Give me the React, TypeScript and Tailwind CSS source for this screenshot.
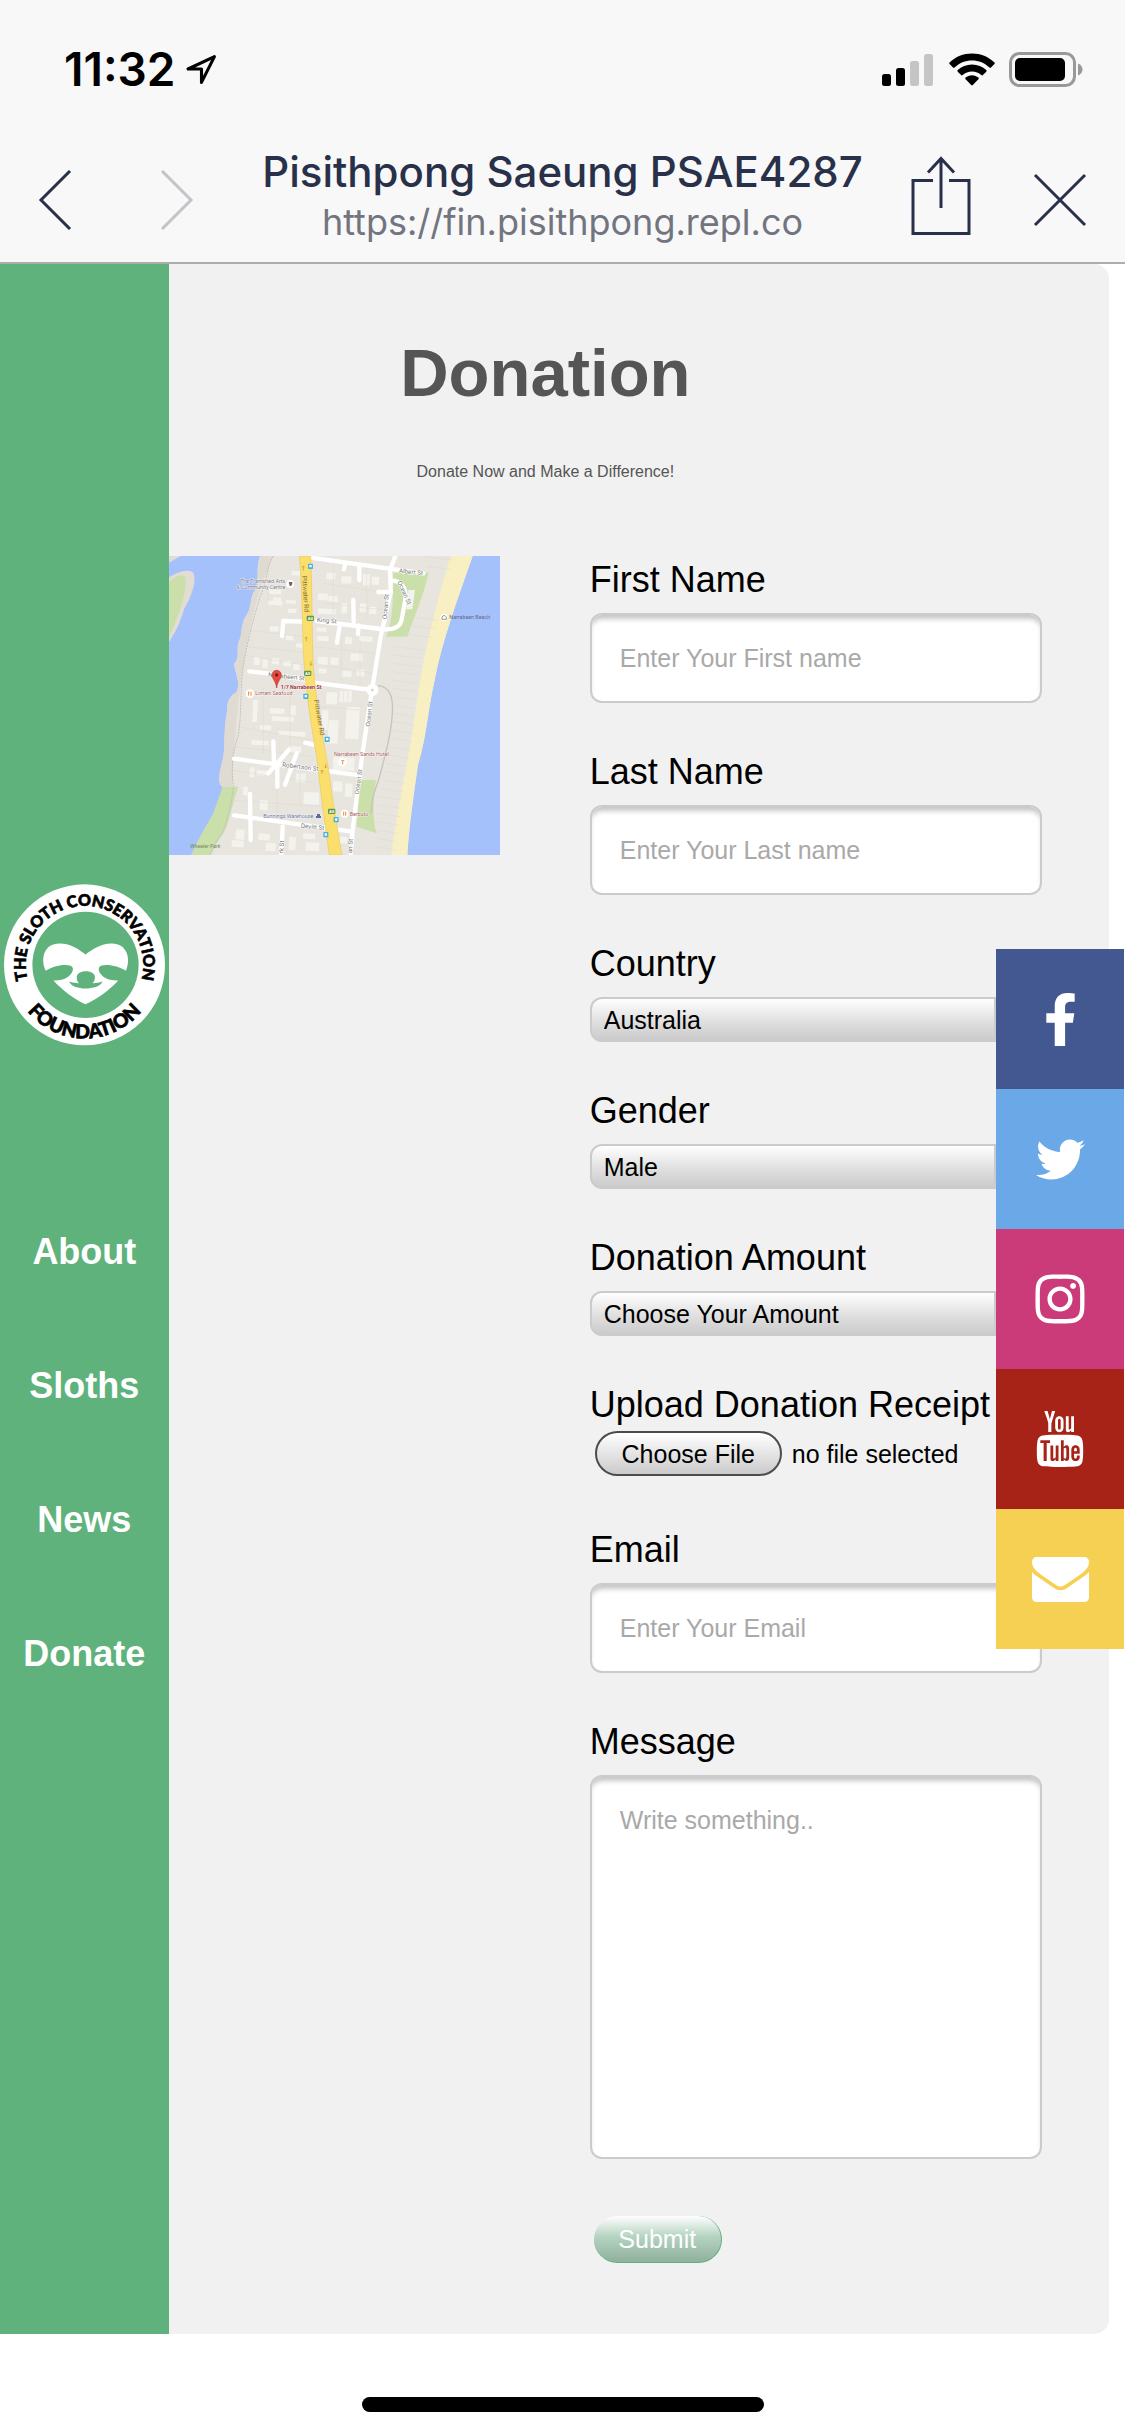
import React from "react";
import { FaFacebookF, FaTwitter, FaInstagram } from "react-icons/fa";
import { TfiYoutube } from "react-icons/tfi";

const BOX =
  "w-full rounded-xl border-2 border-[#cbcbcb] bg-white px-7 text-[25px] text-black placeholder:text-[#a9a9a9] outline-none shadow-[inset_0_6px_5px_-2px_#c6c6c6]";

function LocationArrow() {
  return (
    <svg viewBox="0 0 30 30" className="h-[31px] w-[31px]" fill="none" stroke="#000" strokeWidth="3" strokeLinejoin="round">
      <path d="M27.500 2.500 2 14.500h13v13z" />
    </svg>
  );
}

function StatusIcons() {
  return (
    <div className="flex items-center">
      <svg viewBox="0 0 52 33" className="h-[33px] w-[52px]">
        <rect x="0" y="21" width="9" height="12" rx="2.500" />
        <rect x="14" y="15" width="9" height="18" rx="2.500" />
        <rect x="28" y="8" width="9" height="25" rx="2.500" fill="#c5c5c5" />
        <rect x="42" y="1" width="9" height="32" rx="2.500" fill="#c5c5c5" />
      </svg>
      <svg viewBox="0 0 46 33" className="ml-[15px] h-[33px] w-[46px]">
        <path d="M23 0.500C14.500 0.500 6.500 3.800.600 9.400c-.5.4-.5 1.100 0 1.600l3.400 3.400c.4.4 1.100.4 1.600 0C10.200 10 16.300 7.400 23 7.400s12.800 2.600 17.400 7c.5.4 1.200.4 1.600 0l3.400-3.400c.5-.5.5-1.200 0-1.600C39.500 3.800 31.500.500 23 .500z" />
        <path d="M23 11.500c-5.500 0-10.500 2.100-14.300 5.600-.4.500-.4 1.100 0 1.600l3.400 3.400c.4.400 1.100.4 1.600 0 2.500-2.200 5.700-3.600 9.300-3.600s6.800 1.400 9.300 3.600c.5.4 1.200.4 1.600 0l3.400-3.400c.4-.5.4-1.100 0-1.600C33.500 13.600 28.500 11.500 23 11.500z" />
        <path d="M23 22.200c-2.500 0-4.700.9-6.400 2.400-.5.4-.5 1.100 0 1.600l5.600 5.900c.5.400 1.100.4 1.600 0l5.600-5.900c.5-.5.5-1.200 0-1.600-1.700-1.500-3.900-2.400-6.400-2.400z" />
      </svg>
      <svg viewBox="0 0 74 35" className="ml-[14px] h-[35px] w-[74px]">
        <rect x="1.500" y="1.500" width="64" height="32" rx="9" fill="none" stroke="#999" strokeWidth="3" />
        <rect x="6" y="6" width="50" height="23" rx="5" />
        <path d="M69 11.500c3 1 4.500 3.500 4.500 6s-1.500 5-4.500 6z" fill="#999" />
      </svg>
    </div>
  );
}

function Browser() {
  return (
    <header className="border-b-2 border-[#adadad] bg-[#f8f8f8] font-['Inter',sans-serif]">
      <div className="flex h-[138px] items-center justify-between pl-16 pr-[42px]">
        <div className="flex items-center gap-[10px]">
          <span className="text-[46px] font-semibold leading-[54px] text-black">11:32</span>
          <LocationArrow />
        </div>
        <StatusIcons />
      </div>
      <div className="grid h-[124px] grid-cols-[1fr_auto_1fr] items-center px-[38px]">
        <div className="flex items-center gap-[88px]">
          <button aria-label="Back">
            <svg viewBox="0 0 34 60" className="h-[60px] w-[34px]" fill="none" stroke="#283149" strokeWidth="3">
              <path d="M32 1 3 30l29 29" />
            </svg>
          </button>
          <button aria-label="Forward">
            <svg viewBox="0 0 34 60" className="h-[60px] w-[34px]" fill="none" stroke="#c3c4c9" strokeWidth="3">
              <path d="m2 1 29 29L2 59" />
            </svg>
          </button>
        </div>
        <div className="pb-2 text-center">
          <div className="text-[42px] font-medium leading-[52px] text-[#283149]">Pisithpong Saeung PSAE4287</div>
          <div className="text-[36px] leading-[48px] text-[#72757f]">https://fin.pisithpong.repl.co</div>
        </div>
        <div className="flex items-center justify-end gap-[62px]">
          <button aria-label="Share" className="pb-2">
            <svg viewBox="0 0 60 80" className="h-20 w-[60px]" fill="none" stroke="#283149" strokeWidth="3">
              <path d="M22 24.500H2v53h56v-53H38M30 52V3M17 16.500 30 2.500l13 14" />
            </svg>
          </button>
          <button aria-label="Close">
            <svg viewBox="0 0 54 54" className="h-[54px] w-[54px]" fill="none" stroke="#283149" strokeWidth="3">
              <path d="m2 2 50 50M52 2 2 52" />
            </svg>
          </button>
        </div>
      </div>
    </header>
  );
}

function Logo() {
  return (
    <svg viewBox="12 42 482 484" className="w-[161px]" role="img" aria-label="The Sloth Conservation Foundation">
      <circle cx="253" cy="284" r="241" fill="#fff" />
      <circle cx="256" cy="284" r="159" fill="#5fb27c" />
      <path
        fill="#fff"
        d="M137 302C120 265 132 220 178 220C215 220 235 238 256 253C277 238 300 220 335 220C380 220 393 265 377 302C357 288 320 280 302 287C284 297 306 334 354 331C330 358 290 388 256 402C222 388 185 358 160 331C208 334 230 297 212 287C192 280 157 288 137 302Z"
      />
      <path
        fill="#5fb27c"
        d="M230 318C235 298 279 298 284 318C285 328 282 334 277 339C288 339 297 337 307 334C301 349 277 355 256 355C235 355 213 349 207 334C217 337 226 339 237 339C231 334 229 328 230 318Z"
      />
      <path id="ringTop" d="M109 385A176 176 0 1 1 397 385" fill="none" />
      <path id="ringBottom" d="M46 359A220 220 0 0 0 460 359" fill="none" />
      <g fontFamily="Lato, sans-serif" fontWeight="900" fill="#000" stroke="#000" strokeWidth="2" textAnchor="middle">
        <text fontSize="48">
          <textPath href="#ringTop" startOffset="50%">THE SLOTH CONSERVATION</textPath>
        </text>
        <text fontSize="58">
          <textPath href="#ringBottom" startOffset="50%">FOUNDATION</textPath>
        </text>
      </g>
    </svg>
  );
}

const BUS_STOPS = [[451, 79], [437, 469], [501, 598], [528, 839], [497, 884]];
const ROUTE_SIGNS = [[451, 235], [443, 400], [515, 814]];
const BUILDINGS = [
  [395, 92, 26, 14], [328, 148, 36, 14], [340, 172, 24, 20], [326, 182, 42, 12], [384, 206, 26, 12], [378, 180, 30, 10],
  [330, 258, 26, 16], [378, 286, 22, 14], [408, 310, 20, 12], [282, 350, 18, 24], [308, 358, 16, 26], [336, 354, 22, 18],
  [370, 362, 24, 16], [400, 372, 20, 18], [500, 98, 26, 20], [545, 108, 30, 22], [610, 102, 20, 34], [636, 110, 22, 24],
  [474, 160, 30, 20], [506, 168, 28, 16], [546, 190, 16, 30], [600, 190, 20, 26], [628, 200, 22, 22], [474, 205, 54, 16],
  [470, 262, 30, 12], [472, 288, 34, 14], [556, 290, 20, 22], [598, 288, 40, 16], [572, 340, 36, 22], [474, 350, 30, 24],
  [512, 352, 24, 22], [476, 385, 24, 14], [545, 392, 30, 18], [590, 388, 24, 20], [280, 480, 14, 66], [330, 504, 44, 16],
  [336, 528, 66, 14], [392, 496, 16, 30], [300, 555, 34, 14], [356, 572, 80, 14], [275, 600, 52, 14], [384, 618, 40, 18],
  [500, 456, 32, 36], [540, 452, 10, 34], [553, 452, 10, 34], [566, 452, 10, 34], [486, 510, 20, 60], [506, 540, 30, 70],
  [560, 500, 40, 96], [520, 650, 64, 40], [290, 690, 36, 16], [270, 682, 14, 30], [250, 740, 14, 26], [408, 700, 30, 26],
  [432, 756, 46, 36], [300, 780, 24, 30], [520, 724, 28, 30], [556, 730, 22, 40], [228, 868, 26, 30], [216, 900, 36, 20],
  [296, 880, 34, 20], [318, 908, 30, 24], [388, 890, 20, 40], [430, 880, 36, 16], [438, 906, 40, 26], [540, 890, 22, 20],
];

function StreetMap() {
  return (
    <svg viewBox="27 48 993 897" preserveAspectRatio="none" className="h-[299px] w-[331px] shrink-0" role="img" aria-label="Map of Narrabeen">
      <rect x="27" y="48" width="993" height="897" fill="#a5c1fb" />
      <path d="M27 48H62L27 68ZM27 112C50 96 92 82 102 102C108 130 94 170 72 208C60 250 42 285 27 306Z" fill="#e2ddd3" />
      <path d="M27 128C45 108 68 100 76 112C82 150 60 220 27 292Z" fill="#cbdfaa" />
      <path
        d="M300 48C286 84 300 112 286 150C268 170 276 198 262 222C242 248 248 270 240 296C224 326 244 350 222 372C226 400 242 425 230 456C214 466 200 480 202 510C190 570 196 610 190 650C178 700 170 730 188 740L186 770C172 820 140 850 124 885C114 910 104 925 94 945H742C748 850 762 760 774 674C800 590 802 520 822 430C846 300 896 170 938 48Z"
        fill="#e8e5de"
      />
      <path
        d="M300 48C286 84 300 112 286 150C268 170 276 198 262 222C242 248 248 270 240 296C224 326 244 350 222 372C226 400 242 425 230 456C214 466 200 480 202 510C190 570 196 610 190 650C178 700 170 730 188 740H216C222 620 232 500 246 400C262 290 290 150 340 48Z"
        fill="#dfdbd3"
      />
      <path d="M872 48H938C896 170 846 300 822 430C802 520 800 590 774 674C762 760 748 850 742 945H694C712 800 744 660 760 560C780 430 790 320 872 48Z" fill="#f8f0c2" />
      <path d="M188 740H235C214 800 208 850 190 880C172 905 160 925 152 945H94C110 905 138 860 160 820Z" fill="#cbdfaa" />
      <path d="M700 98H806C790 170 762 230 742 290H678C700 240 700 160 700 98ZM600 720H648C640 780 636 840 650 880L590 860Z" fill="#cbdfaa" />
      <g fill="#f4f2ed">
        {BUILDINGS.map(([x, y, w, h]) => (
          <rect key={`${x}-${y}`} x={x} y={y} width={w} height={h} transform={`rotate(3 ${x} ${y})`} />
        ))}
        <path d="M745 150h20l-8 58h-18z" />
      </g>
      <g fill="none" stroke="#dcd8cf" strokeWidth="1.500">
        <path d="M262 270 430 290M258 320 432 336M250 345 435 375M232 560 450 600M228 620 460 650M215 690 470 730M210 780 490 800M325 60V180M310 440V640M390 430V640M350 700V860M420 700V800M490 130 690 160M500 190 670 210M460 320 650 340M460 370 640 400M520 60V220M620 60V240M545 300V430M600 300V440M480 500 600 510M520 700 590 706" />
        <path d="M700 320 790 330M700 345 786 355M700 370 782 380M698 395 778 405M698 420 774 430M702 445 770 455M704 470 768 480M704 495 764 505M702 520 762 530M700 545 758 555M698 570 756 580M694 595 754 605M690 620 750 630M684 645 746 655M678 670 742 680M672 695 738 705M666 720 734 730M660 745 730 755M654 770 726 780M650 795 722 805M650 820 720 830M650 845 716 855M650 870 712 880M650 895 708 905M650 920 704 930" />
        <path d="M746 230 830 240M740 256 824 266M732 282 816 292M790 50 880 60M800 80 872 88" />
      </g>
      <path d="M340 48C316 90 320 130 300 170C280 240 262 300 250 380C240 440 246 520 234 590C216 640 214 690 220 740C214 800 200 850 186 880C165 905 160 930 150 945" fill="none" stroke="#c4c0b8" strokeWidth="3" strokeDasharray="6 3" />
      <path d="M654 437C690 440 700 470 697 520C694 590 676 640 664 690C650 750 634 760 634 820" fill="none" stroke="#c8c4bd" strokeWidth="4" />
      <g fill="none" stroke="#fff" strokeWidth="13" strokeLinecap="round" strokeLinejoin="round">
        <path d="M446 52 790 100M706 48 690 90 692 156H655M598 80V120M556 72 552 88" />
        <path d="M430 245 370 243 366 288M470 243 664 267C700 272 724 262 726 232L736 180C742 140 720 124 698 122M580 180 581 246M540 252 531 308M596 256 594 282" />
        <path d="M268 394 320 400 430 418M440 425 636 450M692 156 662 290 636 450 606 650 578 870 572 945M222 656 600 706M340 604 342 670M386 630 325 700M352 670V740M410 640 375 734M436 608 460 614M222 826 576 875M270 762 272 900M368 860 364 945" />
      </g>
      <circle cx="637" cy="450" r="18" fill="#fff" />
      <circle cx="637" cy="450" r="4" fill="#d6d2ca" />
      <path d="M418 48H452C456 140 456 250 458 330C460 440 482 560 506 690C516 770 532 870 546 945H508C494 850 480 740 470 650C452 550 434 430 430 330C426 220 426 130 418 48Z" fill="#fbdf6c" stroke="#edc95a" strokeWidth="2" />
      <g fill="#4ab1df">
        {BUS_STOPS.map(([x, y]) => (
          <rect key={y} x={x - 7} y={y - 8} width="15" height="16" rx="2" />
        ))}
      </g>
      <g fill="#fff">
        {BUS_STOPS.map(([x, y]) => (
          <rect key={y} x={x - 3} y={y - 4} width="7" height="7" rx="1" />
        ))}
      </g>
      {ROUTE_SIGNS.map(([x, y]) => (
        <g key={y}>
          <rect x={x - 11} y={y - 8} width="22" height="16" rx="3" fill="#5d9a47" />
          <text x={x} y={y + 5} fontSize="12" fill="#fff" textAnchor="middle" fontWeight="700">A8</text>
        </g>
      ))}
      <g fontFamily="Roboto, sans-serif" fontSize="19" fill="#777" stroke="#fff" strokeWidth="3" paintOrder="stroke">
        <text transform="translate(716 98) rotate(6)">Albert St</text>
        <text transform="translate(712 126) rotate(66)">Ocean St</text>
        <text transform="translate(680 238) rotate(-85)">Ocean St</text>
        <text transform="translate(470 245) rotate(5)">King St</text>
        <text transform="translate(324 410) rotate(6)">Narrabeen St</text>
        <text transform="translate(630 560) rotate(-84)">Ocean St</text>
        <text transform="translate(366 680) rotate(7)">Robertson St</text>
        <text transform="translate(596 764) rotate(-82)">Ocean St</text>
        <text transform="translate(422 863) rotate(6)">Devitt St</text>
        <text transform="translate(576 940) rotate(-87)">an St</text>
        <text transform="translate(370 940) rotate(-87)">rk St</text>
      </g>
      <g fontFamily="Roboto, sans-serif" fontSize="20" fill="#85703a">
        <text transform="translate(426 108) rotate(86)">Pittwater Rd</text>
        <text transform="translate(462 480) rotate(80)">Pittwater Rd</text>
      </g>
      <g fill="none" stroke="#b98f36" strokeWidth="2">
        <path d="M430 92V78m-4 4 4-4 4 4M439 304V291m-4 4 4-4 4 4M453 364v12m-4-4 4 4 4-4M497 672v12m-4-4 4 4 4-4M486 702v-12m-4 4 4-4 4 4" />
      </g>
      <g fill="#fff">
        <circle cx="391" cy="132" r="12" />
        <circle cx="852" cy="232" r="11" />
        <circle cx="270" cy="461" r="13" />
        <circle cx="548" cy="666" r="13" />
        <circle cx="554" cy="821" r="12" />
      </g>
      <g fill="none" stroke="#f08a35" strokeWidth="3">
        <path d="M266 455v12M273 455v12M264 457h4M544 662h9M548 664v9M551 815v12M557 815v12" />
      </g>
      <path d="M386 126h11v6l-4 6h-4z" fill="#72635d" />
      <path d="M846 238v-7l4-4h5l4 4v7z" fill="none" stroke="#666" strokeWidth="2" />
      <path d="M468 834v-6h3v-6h9v6h3v6z" fill="#5d69a5" />
      <g fontFamily="Roboto, sans-serif" fontSize="16" stroke="#fff" strokeWidth="2" paintOrder="stroke">
        <g fill="#787480">
          <text x="376" y="130" textAnchor="end">The Tramshed Arts</text>
          <text x="376" y="146" textAnchor="end">&amp; Community Centre</text>
        </g>
        <text x="868" y="238" fill="#66698a" stroke="none">Narrabeen Beach</text>
        <text x="460" y="833" fill="#666f9e" textAnchor="end">Bunnings Warehouse</text>
        <g fill="#a65a5a">
          <text x="286" y="466">Limani Seafood</text>
          <text x="522" y="648">Narrabeen Sands Hotel</text>
          <text x="569" y="827">Berbuto</text>
        </g>
        <text x="362" y="448" fill="#9d2b35" fontWeight="700">1/7 Narrabeen St</text>
        <text x="90" y="925" fill="#6c8757" stroke="none" fontStyle="italic">Wheeler Park</text>
      </g>
      <path d="M350 444C348 424 337 418 336 405A14 14 0 0 1 364 405C363 418 352 424 350 444Z" fill="#e8493f" stroke="#b43a33" strokeWidth="2" />
      <circle cx="350" cy="405" r="5" fill="#6d1f1a" />
    </svg>
  );
}

function TextField({ id, label, placeholder, type = "text" }: { id: string; label: string; placeholder: string; type?: string }) {
  return (
    <div className="flex flex-col gap-[13px]">
      <label htmlFor={id} className="text-4xl leading-10">{label}</label>
      <input id={id} type={type} placeholder={placeholder} className={`${BOX} h-[90px]`} />
    </div>
  );
}

function SelectField({ id, label, options }: { id: string; label: string; options: string[] }) {
  return (
    <div className="flex flex-col gap-[13px]">
      <label htmlFor={id} className="text-4xl leading-10">{label}</label>
      <select
        id={id}
        className="h-[45px] w-full appearance-none rounded-xl border-2 border-[#cbcbcb] bg-[linear-gradient(#cbcbcb,#cbcbcb),linear-gradient(#ffffff,#e2e2e2_50%,#cbcbcb)] bg-[length:2px_100%,100%_100%] bg-[position:right_44px_top,0_0] bg-no-repeat px-3 text-[25px] leading-[30px] text-black"
      >
        {options.map((o) => (
          <option key={o}>{o}</option>
        ))}
      </select>
    </div>
  );
}

function Envelope() {
  return (
    <svg viewBox="0 0 57 45" className="h-[45px] w-[57px]" fill="#fff">
      <path d="M5 0H52C55 0 57 2 57 5C57 10 53 14 49 17L33 28C30 30 27 30 24 28L8 17C4 14 0 10 0 5C0 2 2 0 5 0Z" />
      <path d="M0 15C2 17 4 19 6 20L22 31C26 34 31 34 35 31L51 20C53 19 55 17 57 15V40C57 43 55 45 52 45H5C2 45 0 43 0 40Z" />
    </svg>
  );
}

function SocialBar() {
  const cell = "flex h-[140px] items-center justify-center text-white";
  return (
    <nav aria-label="Social media" className="absolute right-px top-[685px] w-32">
      <a href="#facebook" aria-label="Facebook" className={`${cell} bg-[#435891]`}><FaFacebookF size={53} /></a>
      <a href="#twitter" aria-label="Twitter" className={`${cell} bg-[#6aa8e8]`}><FaTwitter size={49} /></a>
      <a href="#instagram" aria-label="Instagram" className={`${cell} bg-[#cb3b79]`}><FaInstagram size={56} /></a>
      <a href="#youtube" aria-label="YouTube" className={`${cell} bg-[#a82317]`}><TfiYoutube size={56} /></a>
      <a href="#mail" aria-label="Email us" className={`${cell} bg-[#f6d052]`}><Envelope /></a>
    </nav>
  );
}

export default function App() {
  return (
    <div className="min-h-screen bg-white font-['Liberation_Sans',Arial,sans-serif] text-black">
      <Browser />
      <div className="relative flex">
        <aside className="flex w-[15%] shrink-0 flex-col items-center bg-[#5fb27c] pt-[620px]">
          <Logo />
          <nav className="mt-[186px] flex flex-col items-center gap-[94px] text-4xl font-bold leading-10 text-white">
            <a href="#about">About</a>
            <a href="#sloths">Sloths</a>
            <a href="#news">News</a>
            <a href="#donate">Donate</a>
          </nav>
        </aside>
        <main className="mr-4 flex-1 rounded-r-[15px] bg-[#f1f1f1] pb-[71px] pt-[69px]">
          <div className="pr-[187px] text-center text-[#555]">
            <h1 className="text-[67px] font-bold leading-[80px]">Donation</h1>
            <p className="mt-[47px] text-base leading-6">Donate Now and Make a Difference!</p>
          </div>
          <div className="mt-[72px] flex items-start gap-[90px] pr-[67px]">
            <StreetMap />
            <form className="flex min-w-0 flex-1 flex-col gap-[49px] pt-1">
              <TextField id="fname" label="First Name" placeholder="Enter Your First name" />
              <TextField id="lname" label="Last Name" placeholder="Enter Your Last name" />
              <SelectField id="country" label="Country" options={["Australia", "Canada", "USA"]} />
              <SelectField id="gender" label="Gender" options={["Male", "Female"]} />
              <SelectField id="amount" label="Donation Amount" options={["Choose Your Amount", "$10", "$50", "$100"]} />
              <div className="flex flex-col gap-[6px] pb-[5px]">
                <label htmlFor="receipt" className="whitespace-nowrap text-4xl leading-10">Upload Donation Receipt</label>
                <label htmlFor="receipt" className="flex items-center gap-[10px] pl-[5px] text-[25px] leading-[30px]">
                  <span className="flex h-[45px] w-[187px] items-center justify-center rounded-full border-2 border-[#4c4c4c] bg-linear-to-b from-white to-[#cbcbcb]">
                    Choose File
                  </span>
                  <span>no file selected</span>
                  <input id="receipt" type="file" className="sr-only" />
                </label>
              </div>
              <TextField id="email" label="Email" placeholder="Enter Your Email" type="email" />
              <div className="flex flex-col gap-[13px]">
                <label htmlFor="message" className="text-4xl leading-10">Message</label>
                <textarea id="message" placeholder="Write something.." className={`${BOX} h-[384px] resize-none pt-7 leading-[30px]`} />
              </div>
              <button
                type="submit"
                className="ml-1 mt-2 h-[47px] w-32 self-start rounded-full border-b border-r border-[#5fb27c] bg-linear-to-b from-white via-[#b5d3c1] via-45% to-[#8fb09d] text-[25px] leading-[30px] text-white"
              >
                Submit
              </button>
            </form>
          </div>
        </main>
        <SocialBar />
      </div>
      <footer className="flex justify-center pb-6 pt-[63px]">
        <div className="h-[15px] w-[402px] rounded-full bg-black" />
      </footer>
    </div>
  );
}
